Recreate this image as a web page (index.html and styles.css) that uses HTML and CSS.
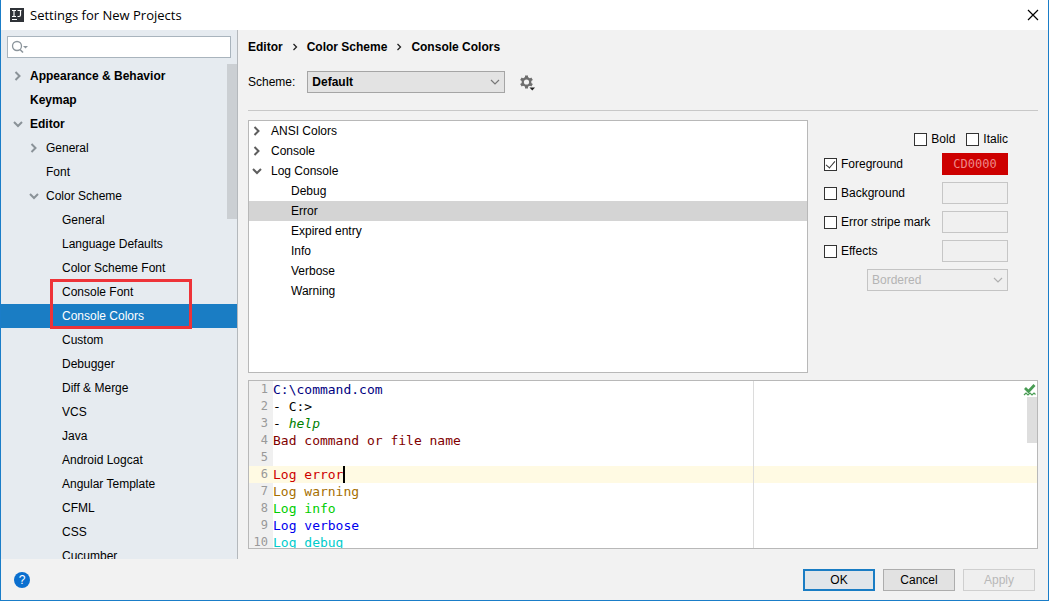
FILE: index.html
```html
<!DOCTYPE html>
<html lang="en">
<head>
<meta charset="utf-8">
<title>Settings for New Projects</title>
<link rel="stylesheet" href="styles.css">
</head>
<body>
<svg class="defs" aria-hidden="true">
  <symbol id="right" viewBox="0 0 16 16"><path d="M5.500 4l4 4-4 4" fill="none" stroke="currentColor" stroke-width="2"/></symbol>
  <symbol id="down" viewBox="0 0 16 16"><path d="M4 6l4 4 4-4" fill="none" stroke="currentColor" stroke-width="2"/></symbol>
  <symbol id="thin-down" viewBox="0 0 16 16"><path d="M4 6l4 4 4-4" fill="none" stroke="currentColor" stroke-width="1.200"/></symbol>
</svg>
<div class="window">
  <header class="titlebar">
    <svg class="logo" viewBox="0 0 14 14" aria-hidden="true"><rect width="14" height="14" fill="#2f3238"/><path d="M2 2.500h4M4 2.500v6M2 8.500h4M7.500 2.500h4M10.500 2.500v4.500q0 1.500-1.500 1.500H7.500" fill="none" stroke="#fff" stroke-width="1.200"/><path d="M2 11.500h5" stroke="#fff" stroke-width="1"/></svg>
    <h1 class="title">Settings for New Projects</h1>
    <button class="close" aria-label="Close"><svg viewBox="0 0 12 12"><path d="M1 1l10 10M11 1L1 11" stroke="#000" stroke-width="1.200"/></svg></button>
  </header>

  <div class="body">
    <aside class="sidebar">
      <div class="search">
        <svg class="search-icon" viewBox="0 0 18 16" aria-hidden="true"><circle cx="6" cy="7" r="4.500" fill="none" stroke="#8c959c" stroke-width="1.300"/><path d="M9 10.500l3 3" stroke="#8c959c" stroke-width="1.600"/><path d="M12 7h5l-2.500 2.500z" fill="#8c959c"/></svg>
        <input class="search-input" type="text" aria-label="Search settings">
      </div>
      <div class="nav">
        <ul class="nav-list">
          <li class="row top"><svg class="arrow"><use href="#right"/></svg>Appearance &amp; Behavior</li>
          <li class="row top"><span class="arrow"></span>Keymap</li>
          <li class="row top"><svg class="arrow"><use href="#down"/></svg>Editor</li>
          <li class="row second"><svg class="arrow"><use href="#right"/></svg>General</li>
          <li class="row second"><span class="arrow"></span>Font</li>
          <li class="row second"><svg class="arrow"><use href="#down"/></svg>Color Scheme</li>
          <li class="row third">General</li>
          <li class="row third">Language Defaults</li>
          <li class="row third">Color Scheme Font</li>
          <li class="marked">
            <ul class="marked-list">
              <li class="row third">Console Font</li>
              <li class="row third selected">Console Colors</li>
            </ul>
          </li>
          <li class="row third">Custom</li>
          <li class="row third">Debugger</li>
          <li class="row third">Diff &amp; Merge</li>
          <li class="row third">VCS</li>
          <li class="row third">Java</li>
          <li class="row third">Android Logcat</li>
          <li class="row third">Angular Template</li>
          <li class="row third">CFML</li>
          <li class="row third">CSS</li>
          <li class="row third">Cucumber</li>
        </ul>
        <span class="nav-thumb"></span>
      </div>
    </aside>

    <main class="pane">
      <nav class="crumbs">
        <span>Editor</span>
        <svg class="crumb-arrow" viewBox="0 0 4 8"><path d="M0.500 1l3 3-3 3" fill="none" stroke="#222" stroke-width="1.300"/></svg>
        <span>Color Scheme</span>
        <svg class="crumb-arrow" viewBox="0 0 4 8"><path d="M0.500 1l3 3-3 3" fill="none" stroke="#222" stroke-width="1.300"/></svg>
        <span>Console Colors</span>
      </nav>
      <div class="scheme">
        <label class="scheme-label" for="scheme">Scheme:</label>
        <div class="combo scheme-combo">
          <select id="scheme" class="select strong"><option>Default</option></select>
          <svg class="combo-arrow"><use href="#thin-down"/></svg>
        </div>
        <button class="gear" aria-label="Scheme actions"><svg viewBox="0 0 18 18"><g stroke="#6e6e6e" stroke-width="3"><path d="M7.500 2.500v13M1.900 5.750l11.200 6.500M1.900 12.250l11.200-6.500"/></g><circle cx="7.500" cy="9" r="4.900" fill="#6e6e6e"/><circle cx="7.500" cy="9" r="2.600" fill="#f2f2f2"/><path d="M10.500 14.500h5.500l-2.700 3z" fill="#222"/></svg></button>
      </div>

      <section class="colors">
        <ul class="keys">
          <li class="key"><svg class="arrow"><use href="#right"/></svg>ANSI Colors</li>
          <li class="key"><svg class="arrow"><use href="#right"/></svg>Console</li>
          <li class="key"><svg class="arrow"><use href="#down"/></svg>Log Console</li>
          <li class="key child">Debug</li>
          <li class="key child current">Error</li>
          <li class="key child">Expired entry</li>
          <li class="key child">Info</li>
          <li class="key child">Verbose</li>
          <li class="key child">Warning</li>
        </ul>
        <div class="options">
          <div class="styles-row">
            <label class="check"><input type="checkbox" class="box">Bold</label>
            <label class="check"><input type="checkbox" class="box">Italic</label>
          </div>
          <div class="option"><label class="check"><input type="checkbox" class="box" checked>Foreground</label><button class="swatch filled">CD0000</button></div>
          <div class="option"><label class="check"><input type="checkbox" class="box">Background</label><button class="swatch" aria-label="Background color" disabled></button></div>
          <div class="option"><label class="check"><input type="checkbox" class="box">Error stripe mark</label><button class="swatch" aria-label="Error stripe color" disabled></button></div>
          <div class="option"><label class="check"><input type="checkbox" class="box">Effects</label><button class="swatch" aria-label="Effect color" disabled></button></div>
          <div class="combo effect-combo">
            <select class="select" aria-label="Effect type" disabled><option>Bordered</option></select>
            <svg class="combo-arrow"><use href="#thin-down"/></svg>
          </div>
        </div>
      </section>

      <section class="preview">
        <div class="line"><span class="num">1</span><code class="navy">C:\command.com</code></div>
        <div class="line"><span class="num">2</span><code>- C:&gt;</code></div>
        <div class="line"><span class="num">3</span><code>- <i class="green">help</i></code></div>
        <div class="line"><span class="num">4</span><code class="maroon">Bad command or file name</code></div>
        <div class="line"><span class="num">5</span><code></code></div>
        <div class="line active"><span class="num">6</span><code class="red">Log error</code><span class="caret"></span></div>
        <div class="line"><span class="num">7</span><code class="brown">Log warning</code></div>
        <div class="line"><span class="num">8</span><code class="lime">Log info</code></div>
        <div class="line"><span class="num">9</span><code class="blue">Log verbose</code></div>
        <div class="line"><span class="num">10</span><code class="cyan">Log debug</code></div>
        <span class="guide"></span>
        <svg class="ok-mark" viewBox="0 0 14 14"><path d="M2 5l3.500 3.500L11.500 2" fill="none" stroke="#499c54" stroke-width="2.800"/><path d="M1 12l2-2 2 2 2-2 2 2 2-2 1.500 1.500" fill="none" stroke="#499c54" stroke-width="1.200"/></svg>
        <span class="preview-thumb"></span>
      </section>
    </main>
  </div>

  <footer class="footer">
    <button class="help" aria-label="Help">?</button>
    <button class="btn primary">OK</button>
    <button class="btn">Cancel</button>
    <button class="btn" disabled>Apply</button>
  </footer>
</div>
</body>
</html>
```
FILE: styles.css
```css
*, *::before, *::after { box-sizing: border-box; }

body {
  margin: 0;
  background: #f2f2f2;
  color: #000;
  font: 12px/16px "Liberation Sans", Arial, sans-serif;
}

ul { margin: 0; padding: 0; list-style: none; }
button, input, select { margin: 0; padding: 0; font: inherit; color: inherit; }
.defs { display: none; }

.window {
  display: flex;
  flex-direction: column;
  height: 100vh;
  border: 1px solid #1a7dc8;
  border-top: 0;
}

.titlebar {
  display: flex;
  align-items: center;
  gap: 6px;
  height: 30px;
  padding: 0 9px;
  background: #fff;
}
.logo { width: 14px; height: 14px; }
.title { flex: 1; margin: 0; font: 13px/16px "Open Sans", "Noto Sans", sans-serif; }
.close { display: flex; border: 0; background: none; }
.close svg { width: 12px; height: 12px; }

.body { display: flex; flex: 1; min-height: 0; }

.sidebar {
  display: flex;
  flex-direction: column;
  flex: 0 0 237px;
  padding-top: 6px;
  border-right: 1px solid #b4b8bc;
  background: #e6ebf0;
}
.search {
  display: flex;
  align-items: center;
  height: 22px;
  margin: 0 6px 6px;
  padding-left: 3px;
  border: 1px solid #a9b4bd;
  background: #fff;
}
.search-icon { flex: none; width: 18px; height: 16px; }
.search-input { flex: 1; min-width: 0; border: 0; outline: 0; background: none; }

.nav { position: relative; flex: 1; min-height: 0; overflow: hidden; }
.row { display: flex; align-items: center; height: 24px; padding-left: 9px; }
.arrow { flex: none; width: 16px; height: 16px; margin-right: 4px; color: #8a9298; }
.top { font-weight: bold; }
.second { padding-left: 25px; }
.third { padding-left: 61px; }
.selected { background: #1a7dc4; color: #fff; }
.marked { position: relative; }
.marked::after {
  content: "";
  position: absolute;
  top: -1px;
  left: 49px;
  width: 142px;
  height: 50px;
  border: 3px solid #ee3338;
}
.nav-thumb {
  position: absolute;
  top: 0;
  right: 0;
  width: 10px;
  height: 155px;
  background: #cbcfd3;
}

.pane {
  display: flex;
  flex-direction: column;
  flex: 1;
  min-width: 0;
  padding: 8px 10px 10px;
}
.crumbs { display: flex; align-items: center; gap: 10px; height: 18px; font-weight: bold; }
.crumb-arrow { width: 4px; height: 8px; overflow: visible; }

.scheme {
  display: flex;
  align-items: center;
  padding: 15px 0 17px;
  border-bottom: 1px solid #c8c8c8;
}
.scheme-label { margin-right: 12px; }
.combo { position: relative; height: 22px; }
.scheme-combo { width: 198px; }
.select {
  appearance: none;
  width: 100%;
  height: 22px;
  padding: 0 20px 0 4px;
  border: 1px solid #a5a5a5;
  border-radius: 0;
  background: #e3e3e3;
}
.select:disabled { border-color: #c4c4c4; background: #efefef; color: #b4b4b4; opacity: 1; }
.strong { font-weight: bold; }
.combo-arrow {
  position: absolute;
  top: 3px;
  right: 2px;
  width: 16px;
  height: 16px;
  color: #777;
  pointer-events: none;
}
.gear { display: flex; margin-left: 14px; border: 0; background: none; }
.gear svg { width: 18px; height: 18px; }

.colors { display: flex; flex: 3 1 3px; min-height: 0; margin-top: 9px; }
.keys { flex: 1; border: 1px solid #b8b8b8; background: #fff; overflow: hidden; }
.key { display: flex; align-items: center; height: 20px; }
.key .arrow { margin-right: 6px; color: #5e5e5e; }
.child { padding-left: 42px; }
.current { background: #d4d4d4; }

.options {
  display: flex;
  flex-direction: column;
  gap: 7px;
  flex: 0 0 230px;
  padding: 8px 30px 0 16px;
}
.styles-row {
  display: flex;
  justify-content: flex-end;
  gap: 11px;
  height: 22px;
  margin-bottom: -4px;
}
.option { display: flex; align-items: center; justify-content: space-between; height: 22px; }
.check { display: flex; align-items: center; gap: 4px; white-space: nowrap; }
.box {
  appearance: none;
  position: relative;
  width: 13px;
  height: 13px;
  border: 1px solid #333;
  background: #fff;
}
.box:checked::after {
  content: "";
  position: absolute;
  top: 0;
  left: 3px;
  width: 5px;
  height: 9px;
  border: solid #333;
  border-width: 0 1px 1px 0;
  transform: rotate(40deg);
}
.swatch { width: 66px; height: 22px; border: 1px solid #c6c6c6; background: #f0f0f0; }
.filled {
  border-color: #c00;
  background: #cd0000;
  color: #e88;
  font: 12px/16px "DejaVu Sans Mono", monospace;
}
.effect-combo { align-self: flex-end; width: 141px; }
.effect-combo .combo-arrow { color: #b0b0b0; }

.preview {
  position: relative;
  flex: 2 1 0;
  min-height: 0;
  margin-top: 7px;
  border: 1px solid #b8b8b8;
  background: #fff;
  overflow: hidden;
  font: 13px/17px "DejaVu Sans Mono", monospace;
}
.line { display: flex; height: 17px; }
.line code { font: inherit; white-space: pre; }
.num {
  flex: 0 0 24px;
  padding-right: 5px;
  background: #f0f0f0;
  color: #999;
  font-size: 12px;
  text-align: right;
}
.active, .active .num { background: #fffae3; }
.caret { width: 2px; background: #000; }
.navy { color: #000080; }
.green { color: #007f00; }
.maroon { color: #7f0000; }
.red { color: #cd0000; }
.brown { color: #a66f00; }
.lime { color: #00cd00; }
.blue { color: #0000ee; }
.cyan { color: #00cccc; }
.guide { position: absolute; top: 0; bottom: 0; left: 504px; width: 1px; background: #dcdcdc; }
.ok-mark { position: absolute; top: 2px; right: 0; width: 14px; height: 14px; }
.preview-thumb { position: absolute; top: 16px; right: 0; width: 10px; height: 46px; background: #dedede; }

.footer {
  display: flex;
  align-items: center;
  gap: 8px;
  height: 41px;
  padding: 0 13px;
}
.help {
  width: 16px;
  height: 16px;
  margin-right: auto;
  border: 0;
  border-radius: 50%;
  background: #0a6fcf;
  color: #fff;
  font-size: 12px;
  line-height: 16px;
}
.btn { width: 72px; height: 22px; border: 1px solid #adadad; background: #e2e2e2; }
.primary { border: 2px solid #1a7dc4; background: #e1e6ea; }
.btn:disabled { border-color: #cfcfcf; background: #efefef; color: #b8b8b8; }
```
